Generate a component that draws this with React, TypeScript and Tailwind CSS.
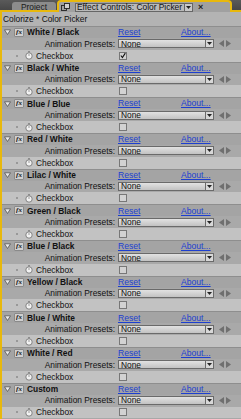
import React from "react";

const groups = [
  "White / Black",
  "Black / White",
  "Blue / Blue",
  "Red / White",
  "Lilac / White",
  "Green / Black",
  "Blue / Black",
  "Yellow / Black",
  "Blue / White",
  "White / Red",
  "Custom",
];

function Triangle() {
  return (
    <svg width="7" height="6" viewBox="0 0 7 6" className="shrink-0">
      <path d="M0.5 0.8 L6.5 0.8 L3.5 5.5 Z" fill="#eaeaea" stroke="#555" strokeWidth="0.8" />
    </svg>
  );
}

function Fx() {
  return (
    <div className="flex h-[9px] w-[10px] shrink-0 items-center justify-center rounded-[1px] bg-[#cfcfcf] border border-[#8a8a8a]">
      <span className="text-[7px] font-bold italic leading-none text-[#111]" style={{ fontFamily: "'Liberation Serif', serif" }}>fx</span>
    </div>
  );
}

function Stopwatch() {
  return (
    <svg width="8" height="9" viewBox="0 0 8 9" className="shrink-0">
      <rect x="3" y="0.3" width="2" height="1.2" fill="#777" />
      <circle cx="4" cy="5" r="3.2" fill="#f2f2f2" stroke="#777" strokeWidth="0.9" />
      <path d="M4 5 L4 3" stroke="#777" strokeWidth="0.7" />
    </svg>
  );
}

function Group({ name, checked }: { name: string; checked: boolean }) {
  return (
    <div className="flex flex-col">
      <div className="flex h-[11.9px] items-center bg-[#a4a4a4] border-t border-[#8e8e8e]">
        <div className="w-[4px] shrink-0" />
        <Triangle />
        <div className="w-[3px] shrink-0" />
        <Fx />
        <span className="ml-[3px] w-[91px] shrink-0 whitespace-nowrap text-[8.4px] font-bold leading-none text-[#111]">{name}</span>
        <span className="w-[63px] shrink-0 text-[8.6px] leading-none text-[#1d3fd0] underline">Reset</span>
        <span className="whitespace-nowrap text-[8.6px] leading-none text-[#1d3fd0] underline">About...</span>
      </div>
      <div className="flex h-[11.9px] items-center bg-[#a9a9a9]">
        <span className="w-[115px] shrink-0 whitespace-nowrap text-right text-[8.4px] leading-none text-[#111]">Animation Presets:</span>
        <div className="ml-[3px] flex h-[9px] w-[96px] shrink-0 items-center border border-[#6a6a6a] bg-gradient-to-b from-[#e2e2e2] to-[#c2c2c2]">
          <span className="ml-[2px] flex-1 text-[8.4px] leading-none text-[#111]">None</span>
          <div className="flex h-full w-[8px] items-center justify-center border-l border-[#6a6a6a] bg-[#d8d8d8]">
            <svg width="5" height="3" viewBox="0 0 5 3"><path d="M0 0 L5 0 L2.5 3 Z" fill="#222" /></svg>
          </div>
        </div>
        <div className="ml-[5px] flex items-center gap-[2px]">
          <svg width="5" height="7" viewBox="0 0 5 7"><path d="M5 0 L0 3.5 L5 7 Z" fill="#6f6f6f" /></svg>
          <svg width="5" height="7" viewBox="0 0 5 7"><path d="M0 0 L5 3.5 L0 7 Z" fill="#6f6f6f" /></svg>
        </div>
      </div>
      <div className="flex h-[11.9px] items-center bg-[#c2c2c2]">
        <div className="ml-[16px] h-[2px] w-[2px] shrink-0 rounded-full bg-[#8a8a8a]" />
        <div className="ml-[7px]"><Stopwatch /></div>
        <span className="ml-[3px] w-[83px] shrink-0 text-[8.4px] leading-none text-[#111]">Checkbox</span>
        <div className="flex h-[8px] w-[8px] items-center justify-center border border-[#777] bg-[#d2d2d2]">
          {checked && (
            <svg width="7" height="7" viewBox="0 0 7 7"><path d="M1 3.5 L2.8 5.8 L6.2 0.8" fill="none" stroke="#111" strokeWidth="1.3" /></svg>
          )}
        </div>
      </div>
    </div>
  );
}

export default function App() {
  return (
    <div className="relative h-[419px] w-[241px] overflow-hidden bg-[#a8a8a8]" style={{ fontFamily: "'Liberation Sans', Arial, sans-serif" }}>
      {/* Tab bar */}
      <div className="relative flex h-[12px] items-end bg-gradient-to-b from-[#5a5a5a] to-[#444]">
        <div className="ml-[12px] flex h-[10px] w-[44px] items-center justify-center rounded-t-[3px] bg-[#8c8c8c]">
          <span className="text-[8.4px] leading-none text-[#1a1a1a]">Project</span>
        </div>
        <div className="ml-[1px] flex h-[12px] w-[175px] items-center rounded-t-[4px] border-[2px] border-b-0 border-[#e8b80c] bg-[#a0a0a0]">
          <svg width="9" height="8" viewBox="0 0 9 8" className="ml-[2px] shrink-0">
            <rect x="0.5" y="2.5" width="5" height="5" fill="none" stroke="#222" strokeWidth="0.9" />
            <rect x="3.5" y="0.5" width="5" height="5" fill="#cfcfcf" stroke="#222" strokeWidth="0.9" />
          </svg>
          <div className="ml-[5px] flex h-[9px] items-center border border-[#666] bg-[#b9b9b9]">
            <span className="whitespace-nowrap px-[1px] text-[8.4px] leading-none text-[#111]">Effect Controls: Color Picker</span>
            <div className="ml-[1px] flex h-full w-[8px] shrink-0 items-center justify-center border-l border-[#666] bg-[#c8c8c8]">
              <svg width="5" height="3" viewBox="0 0 5 3"><path d="M0 0 L5 0 L2.5 3 Z" fill="#222" /></svg>
            </div>
          </div>
          <span className="ml-[5px] text-[9px] font-bold leading-none text-[#222]">×</span>
        </div>
        <div className="flex-1" />
        <div className="absolute bottom-0 left-0 h-[2px] w-[57px] bg-[#e8b80c]" />
        <div className="absolute bottom-0 right-0 h-[2px] w-[10px] bg-[#e8b80c]" />
      </div>
      <div className="absolute left-0 top-[10px] h-[409px] w-[2px] bg-[#e8b80c]" />
      {/* Title row */}
      <div className="flex h-[14px] items-center bg-[#b3b3b3] pl-[3px]">
        <span className="text-[8.4px] leading-none text-[#111]">Colorize * Color Picker</span>
      </div>
      {groups.map((g, i) => (
        <Group key={g} name={g} checked={i === 0} />
      ))}
    </div>
  );
}
